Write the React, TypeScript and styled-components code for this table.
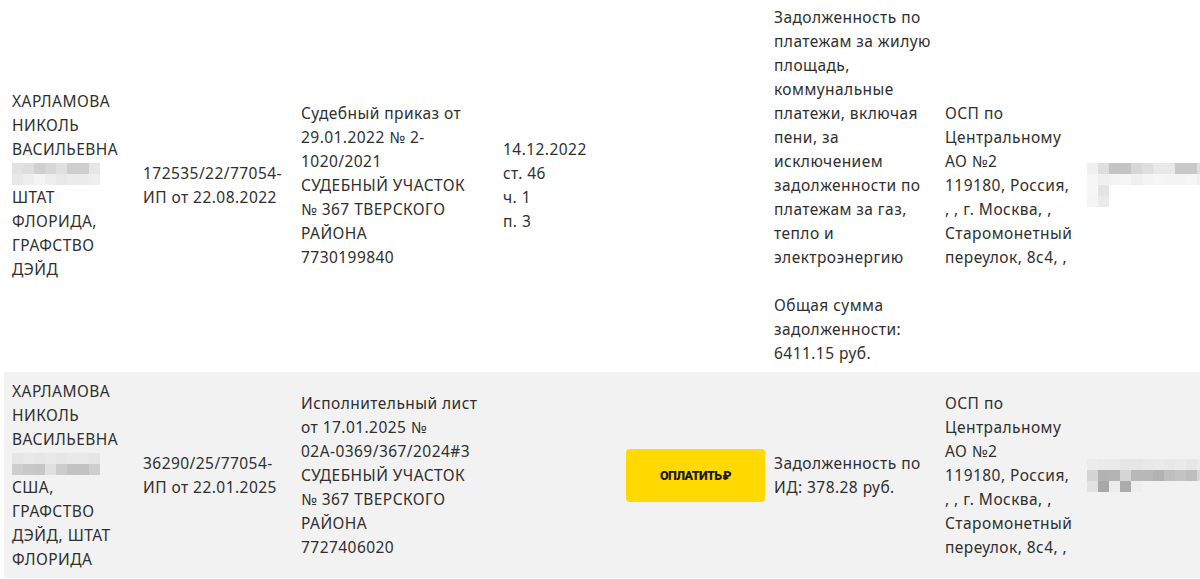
import styled, { createGlobalStyle } from "styled-components";

const GlobalStyle = createGlobalStyle`
  html, body {
    margin: 0;
    padding: 0;
    background: #ffffff;
  }
  body {
    font-family: "Noto Sans", "Open Sans", sans-serif;
    color: #2f2f2f;
    overflow: hidden;
  }
`;

type Row = {
  debtor: (string | null)[];
  proceeding: string[];
  document: string[];
  ended: string[];
  payable: boolean;
  subject: string[];
  department: string[];
  executor: number[][];
};

const rows: Row[] = [
  {
    debtor: [
      "ХАРЛАМОВА",
      "НИКОЛЬ",
      "ВАСИЛЬЕВНА",
      null,
      "ШТАТ",
      "ФЛОРИДА,",
      "ГРАФСТВО",
      "ДЭЙД",
    ],
    proceeding: ["172535/22/77054-", "ИП от 22.08.2022"],
    document: [
      "Судебный приказ от",
      "29.01.2022 № 2-",
      "1020/2021",
      "СУДЕБНЫЙ УЧАСТОК",
      "№ 367 ТВЕРСКОГО",
      "РАЙОНА",
      "7730199840",
    ],
    ended: ["14.12.2022", "ст. 46", "ч. 1", "п. 3"],
    payable: false,
    subject: [
      "Задолженность по",
      "платежам за жилую",
      "площадь,",
      "коммунальные",
      "платежи, включая",
      "пени, за",
      "исключением",
      "задолженности по",
      "платежам за газ,",
      "тепло и",
      "электроэнергию",
      "",
      "Общая сумма",
      "задолженности:",
      "6411.15 руб.",
    ],
    department: [
      "ОСП по",
      "Центральному",
      "АО №2",
      "119180, Россия,",
      ", , г. Москва, ,",
      "Старомонетный",
      "переулок, 8с4, ,",
    ],
    executor: [
      [240, 222, 196, 196, 214, 222, 232, 232, 200, 200, 222],
      [246, 240, 244, 246, 240, 244, 246, 244, 244, 246, 240],
      [246, 228],
      [244, 234],
    ],
  },
  {
    debtor: [
      "ХАРЛАМОВА",
      "НИКОЛЬ",
      "ВАСИЛЬЕВНА",
      null,
      "США,",
      "ГРАФСТВО",
      "ДЭЙД, ШТАТ",
      "ФЛОРИДА",
    ],
    proceeding: ["36290/25/77054-", "ИП от 22.01.2025"],
    document: [
      "Исполнительный лист",
      "от 17.01.2025 №",
      "02А-0369/367/2024#3",
      "СУДЕБНЫЙ УЧАСТОК",
      "№ 367 ТВЕРСКОГО",
      "РАЙОНА",
      "7727406020",
    ],
    ended: [],
    payable: true,
    subject: ["Задолженность по", "ИД: 378.28 руб."],
    department: [
      "ОСП по",
      "Центральному",
      "АО №2",
      "119180, Россия,",
      ", , г. Москва, ,",
      "Старомонетный",
      "переулок, 8с4, ,",
    ],
    executor: [
      [236, 234, 234, 230, 230, 232, 234, 232, 234, 230, 236],
      [212, 178, 180, 214, 184, 184, 178, 190, 196, 190, 214],
      [226, 168, 236, 172, 238],
    ],
  },
];

const debtorMosaic = [
  [226, 222, 208, 214, 224, 206, 206, 230],
  [232, 238, 244, 238, 232, 236, 236, 238],
];

const debtorMosaicGrey = [
  [230, 232, 230, 232, 230, 232, 232, 230],
  [206, 200, 198, 224, 204, 194, 194, 206],
];

const Table = styled.div`
  display: flex;
  flex-direction: column;
  margin-left: 4px;
  width: 1196px;
  font-size: 15.5px;
  letter-spacing: 0.45px;
  line-height: 24px;
`;

const RowBox = styled.div<{ $shaded: boolean; $first: boolean }>`
  display: grid;
  grid-template-columns: 131px 158px 202px 123px 148px 171px 142px 1fr;
  align-items: center;
  padding: ${(p) => (p.$first ? "5px" : "7px")} 0 7px;
  background: ${(p) => (p.$shaded ? "#f2f2f2" : "#ffffff")};
`;

const Cell = styled.div`
  padding: 0 8px;
  white-space: nowrap;
`;

const Line = styled.div`
  height: 24px;
`;

const PayButton = styled.button`
  display: flex;
  align-items: center;
  justify-content: center;
  gap: 1px;
  width: 139px;
  height: 53px;
  border: none;
  border-radius: 4px;
  background: #ffd900;
  color: #1a1a1a;
  font-family: "Roboto", "Noto Sans", sans-serif;
  font-weight: 900;
  font-size: 12.5px;
  letter-spacing: -0.6px;
  cursor: pointer;
  padding: 0;
`;

const MosaicBox = styled.div<{ $top: number }>`
  display: flex;
  flex-direction: column;
  padding-top: ${(p) => p.$top}px;
  filter: blur(0.6px);
`;

const MosaicRow = styled.div`
  display: flex;
`;

const MosaicCell = styled.div<{ $shade: number; $w: number; $h: number }>`
  width: ${(p) => p.$w}px;
  height: ${(p) => p.$h}px;
  background: ${(p) => `rgb(${p.$shade}, ${p.$shade}, ${p.$shade})`};
`;

const Mosaic = ({
  grid,
  w,
  h,
  top = 0,
}: {
  grid: number[][];
  w: number;
  h: number;
  top?: number;
}) => (
  <MosaicBox $top={top}>
    {grid.map((r, i) => (
      <MosaicRow key={i}>
        {r.map((s, j) => (
          <MosaicCell key={j} $shade={s} $w={w} $h={h} />
        ))}
      </MosaicRow>
    ))}
  </MosaicBox>
);

const Lines = ({ items }: { items: string[] }) => (
  <>
    {items.map((t, i) => (
      <Line key={i}>{t}</Line>
    ))}
  </>
);

const App = () => {
  return (
    <>
      <GlobalStyle />
      <Table>
        {rows.map((r, i) => (
          <RowBox key={i} $shaded={i % 2 === 1} $first={i === 0}>
            <Cell>
              {r.debtor.map((t, j) =>
                t === null ? (
                  <Line key={j}>
                    <Mosaic
                      grid={i === 0 ? debtorMosaic : debtorMosaicGrey}
                      w={11}
                      h={11}
                      top={2}
                    />
                  </Line>
                ) : (
                  <Line key={j}>{t}</Line>
                )
              )}
            </Cell>
            <Cell>
              <Lines items={r.proceeding} />
            </Cell>
            <Cell>
              <Lines items={r.document} />
            </Cell>
            <Cell>
              <Lines items={r.ended} />
            </Cell>
            <Cell>
              {r.payable && (
                <PayButton>
                  <span>ОПЛАТИТЬ</span>
                  <span>₽</span>
                </PayButton>
              )}
            </Cell>
            <Cell>
              <Lines items={r.subject} />
            </Cell>
            <Cell>
              <Lines items={r.department} />
            </Cell>
            <Cell>
              <Mosaic grid={r.executor} w={11} h={11} />
            </Cell>
          </RowBox>
        ))}
      </Table>
    </>
  );
};

export default App;
